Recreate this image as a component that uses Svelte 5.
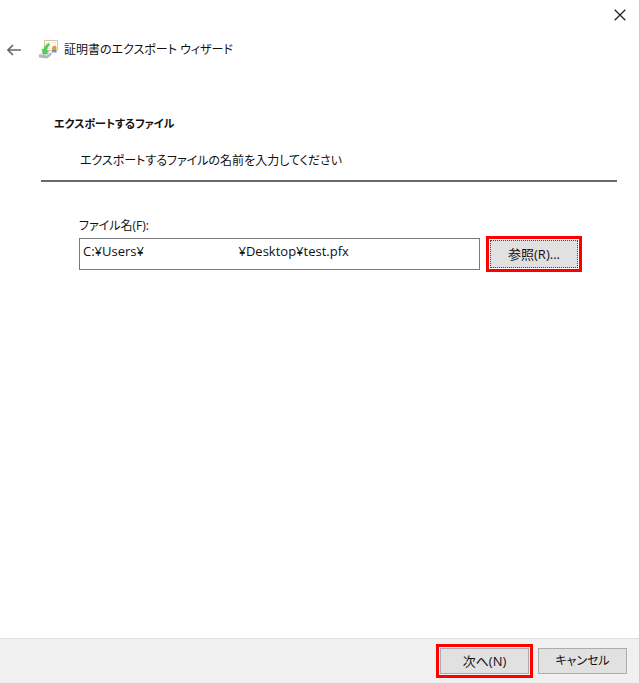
<script>
    let fileName = $state('C:¥Users¥' + '\u00a0'.repeat(28) + '¥Desktop¥test.pfx')
</script>

<style>
    :global(body) {
        background: #ffffff;
    }

    .wizard {
        box-sizing: border-box;
        min-height: 100vh;
        display: flex;
        flex-direction: column;
        border-right: #add8e6 solid 1px;
        background: #ffffff;
        color: #111111;
        font-family: "Open Sans", "Noto Sans CJK JP", sans-serif;
        font-size: 12px;
        line-height: 20px;
        font-feature-settings: "palt";
    }

    button, input {
        box-sizing: border-box;
        margin: 0;
        font: inherit;
        font-feature-settings: inherit;
        color: inherit;
    }

    svg {
        display: block;
    }

    .caption {
        display: flex;
        justify-content: flex-end;
    }

    .icon-button {
        display: flex;
        align-items: center;
        justify-content: center;
        padding: 0;
        border: 0;
        background: none;
    }

    .close {
        width: 38px;
        height: 30px;
    }

    .title-bar {
        display: flex;
        align-items: center;
        height: 40px;
        padding-left: 4px;
    }

    .back {
        width: 20px;
        height: 24px;
        margin-right: 15px;
    }

    .title-bar h1 {
        margin: 0 0 0 5px;
        font-size: 12px;
        font-weight: normal;
    }

    main {
        flex: 1;
        padding: 44px 22px 0 41px;
    }

    .heading {
        padding: 0 13px 9px;
        border-bottom: #696969 solid 2px;
    }

    h2 {
        margin: 0;
        font-size: 11px;
        font-weight: bold;
    }

    .heading p {
        margin: 17px 0 0 26px;
    }

    .field {
        padding: 34px 35px 0 38px;
    }

    .field label {
        display: block;
    }

    .field-row {
        display: flex;
        align-items: center;
        gap: 6px;
    }

    .field-row input {
        flex: 1;
        min-width: 0;
        height: 32px;
        padding: 0 3px 6px;
        border: #7a7a7a solid 1px;
        border-radius: 0;
        background: #ffffff;
        font-size: 13px;
    }

    .highlight {
        display: flex;
        padding: 1px;
        border: #ff0000 solid 3px;
    }

    .push {
        width: 89px;
        height: 26px;
        padding: 0;
        border: #adadad solid 1px;
        border-radius: 0;
        background: #e1e1e1;
    }

    .highlight .push {
        font-size: 13px;
    }

    .push.focused {
        width: 88px;
        height: 28px;
        border: #444444 dotted 1px;
    }

    footer {
        display: flex;
        justify-content: flex-end;
        align-items: center;
        gap: 5px;
        box-sizing: border-box;
        height: 45px;
        padding-right: 12px;
        border-top: #dfdfdf solid 1px;
        background: #f0f0f0;
    }
</style>

<div class="wizard">
    <div class="caption">
        <button class="icon-button close" aria-label="閉じる">
            <svg width="12" height="12" viewBox="0 0 12 12">
                <path d="M.7.7 11.3 11.3M11.3.7.7 11.3" fill="none" stroke="#222" stroke-width="1.3"/>
            </svg>
        </button>
    </div>

    <div class="title-bar">
        <button class="icon-button back" aria-label="戻る">
            <svg width="14" height="12" viewBox="0 0 14 12">
                <path d="M14 6H1M6 1 1 6l5 5" fill="none" stroke="#666" stroke-width="1.6"/>
            </svg>
        </button>
        <svg width="20" height="20" viewBox="0 0 20 20" aria-hidden="true">
            <path d="M5.5.5h13v10h-13z" fill="#fffefb" stroke="#d9c3a6"/>
            <path d="M7.500 2.500h9v6h-9z" fill="none" stroke="#f1e8da"/>
            <path d="m13.500 8-.5 5 2-1 2.500 1-.5-5z" fill="#5b8fd6"/>
            <circle cx="15.300" cy="8" r="2.300" fill="#ee991c"/>
            <path d="M0 14.500 4 11.500l8.500.5v3L8 18.500l-8-1z" fill="#b4b7ba"/>
            <path d="M0 14.500 4 11.500l8.500.5L8 15.500z" fill="#eef0f1"/>
            <path d="M2.500 14 5 12.500l5 .5-2 1.500z" fill="#a9acaf"/>
            <path d="M10 3.500C7 4.500 5.500 6.500 5 9.500L3 9l1.500 5.500L9.500 11.500l-2-.7C8 8 9 6 11 4.500z" fill="#4dd44c" stroke="#35b83a" stroke-width=".5"/>
        </svg>
        <h1>証明書のエクスポート ウィザード</h1>
    </div>

    <main>
        <div class="heading">
            <h2>エクスポートするファイル</h2>
            <p>エクスポートするファイルの名前を入力してください</p>
        </div>

        <div class="field">
            <label for="file-name">ファイル名(F):</label>
            <div class="field-row">
                <input id="file-name" type="text" bind:value={fileName}>
                <span class="highlight">
                    <button class="push focused">参照(R)...</button>
                </span>
            </div>
        </div>
    </main>

    <footer>
        <span class="highlight">
            <button class="push">次へ(N)</button>
        </span>
        <button class="push">キャンセル</button>
    </footer>
</div>
